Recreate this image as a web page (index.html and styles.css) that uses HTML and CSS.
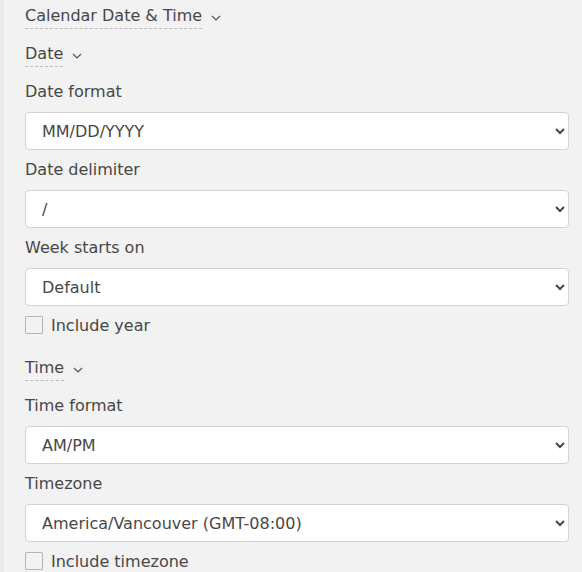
FILE: index.html
```html
<!DOCTYPE html>
<html lang="en">
<head>
<meta charset="utf-8">
<title>Calendar Date &amp; Time</title>
<link rel="stylesheet" href="styles.css">
</head>
<body>
<div class="panel">
  <div class="heading"><span class="heading-text">Calendar Date &amp; Time</span><svg class="chev" width="10" height="6" viewBox="0 0 10 6"><path d="M1 1l4 4 4-4" fill="none" stroke="#555" stroke-width="1.2"/></svg></div>

  <section class="section">
    <div class="heading"><span class="heading-text">Date</span><svg class="chev" width="10" height="6" viewBox="0 0 10 6"><path d="M1 1l4 4 4-4" fill="none" stroke="#555" stroke-width="1.2"/></svg></div>
    <div class="field">
      <label class="label">Date format</label>
      <select class="select"><option>MM/DD/YYYY</option></select>
    </div>
    <div class="field">
      <label class="label">Date delimiter</label>
      <select class="select"><option>/</option></select>
    </div>
    <div class="field">
      <label class="label">Week starts on</label>
      <select class="select"><option>Default</option></select>
    </div>
    <div class="field check-row"><span class="box"></span><span class="check-text">Include year</span></div>
  </section>

  <section class="section">
    <div class="heading"><span class="heading-text">Time</span><svg class="chev" width="10" height="6" viewBox="0 0 10 6"><path d="M1 1l4 4 4-4" fill="none" stroke="#555" stroke-width="1.2"/></svg></div>
    <div class="field">
      <label class="label">Time format</label>
      <select class="select"><option>AM/PM</option></select>
    </div>
    <div class="field">
      <label class="label">Timezone</label>
      <select class="select"><option>America/Vancouver (GMT-08:00)</option></select>
    </div>
    <div class="field check-row"><span class="box"></span><span class="check-text">Include timezone</span></div>
  </section>
</div>
</body>
</html>
```

FILE: styles.css
```css
html, body {
  margin: 0;
  padding: 0;
  height: 100%;
}
body {
  background: #f2f2f2;
  border-left: 4px solid #eaeaea;
  box-sizing: border-box;
  font-family: "DejaVu Sans", sans-serif;
  font-size: 16px;
  color: #474747;
  overflow: hidden;
}
.panel {
  padding: 3px 13px 0 21px;
}
.heading {
  display: flex;
  align-items: center;
  gap: 9px;
  line-height: 24px;
  margin-bottom: 12px;
}
.heading-text {
  display: inline-block;
  padding-top: 1px;
  border-bottom: 1px dashed #bdbdbd;
}
.chev {
  display: block;
  margin-top: 4px;
}
.section {
  margin-bottom: 18px;
}
.field {
  margin-bottom: 7px;
}
.label {
  display: block;
  line-height: 22px;
  padding-top: 2px;
  margin-bottom: 9px;
}
.select {
  display: block;
  width: 100%;
  height: 38px;
  box-sizing: border-box;
  border: 1px solid #d4d4d8;
  border-radius: 4px;
  background-color: #fff;
  padding: 0 12px 0 12px;
  font-family: inherit;
  font-size: 16px;
  color: #474747;
}
.check-row {
  display: flex;
  align-items: center;
  gap: 8px;
  height: 24px;
}
.check-text {
  line-height: 22px;
  padding-top: 2px;
}
.box {
  width: 18px;
  height: 18px;
  box-sizing: border-box;
  border: 1px solid #b2b6b9;
  border-radius: 1px;
}
```
